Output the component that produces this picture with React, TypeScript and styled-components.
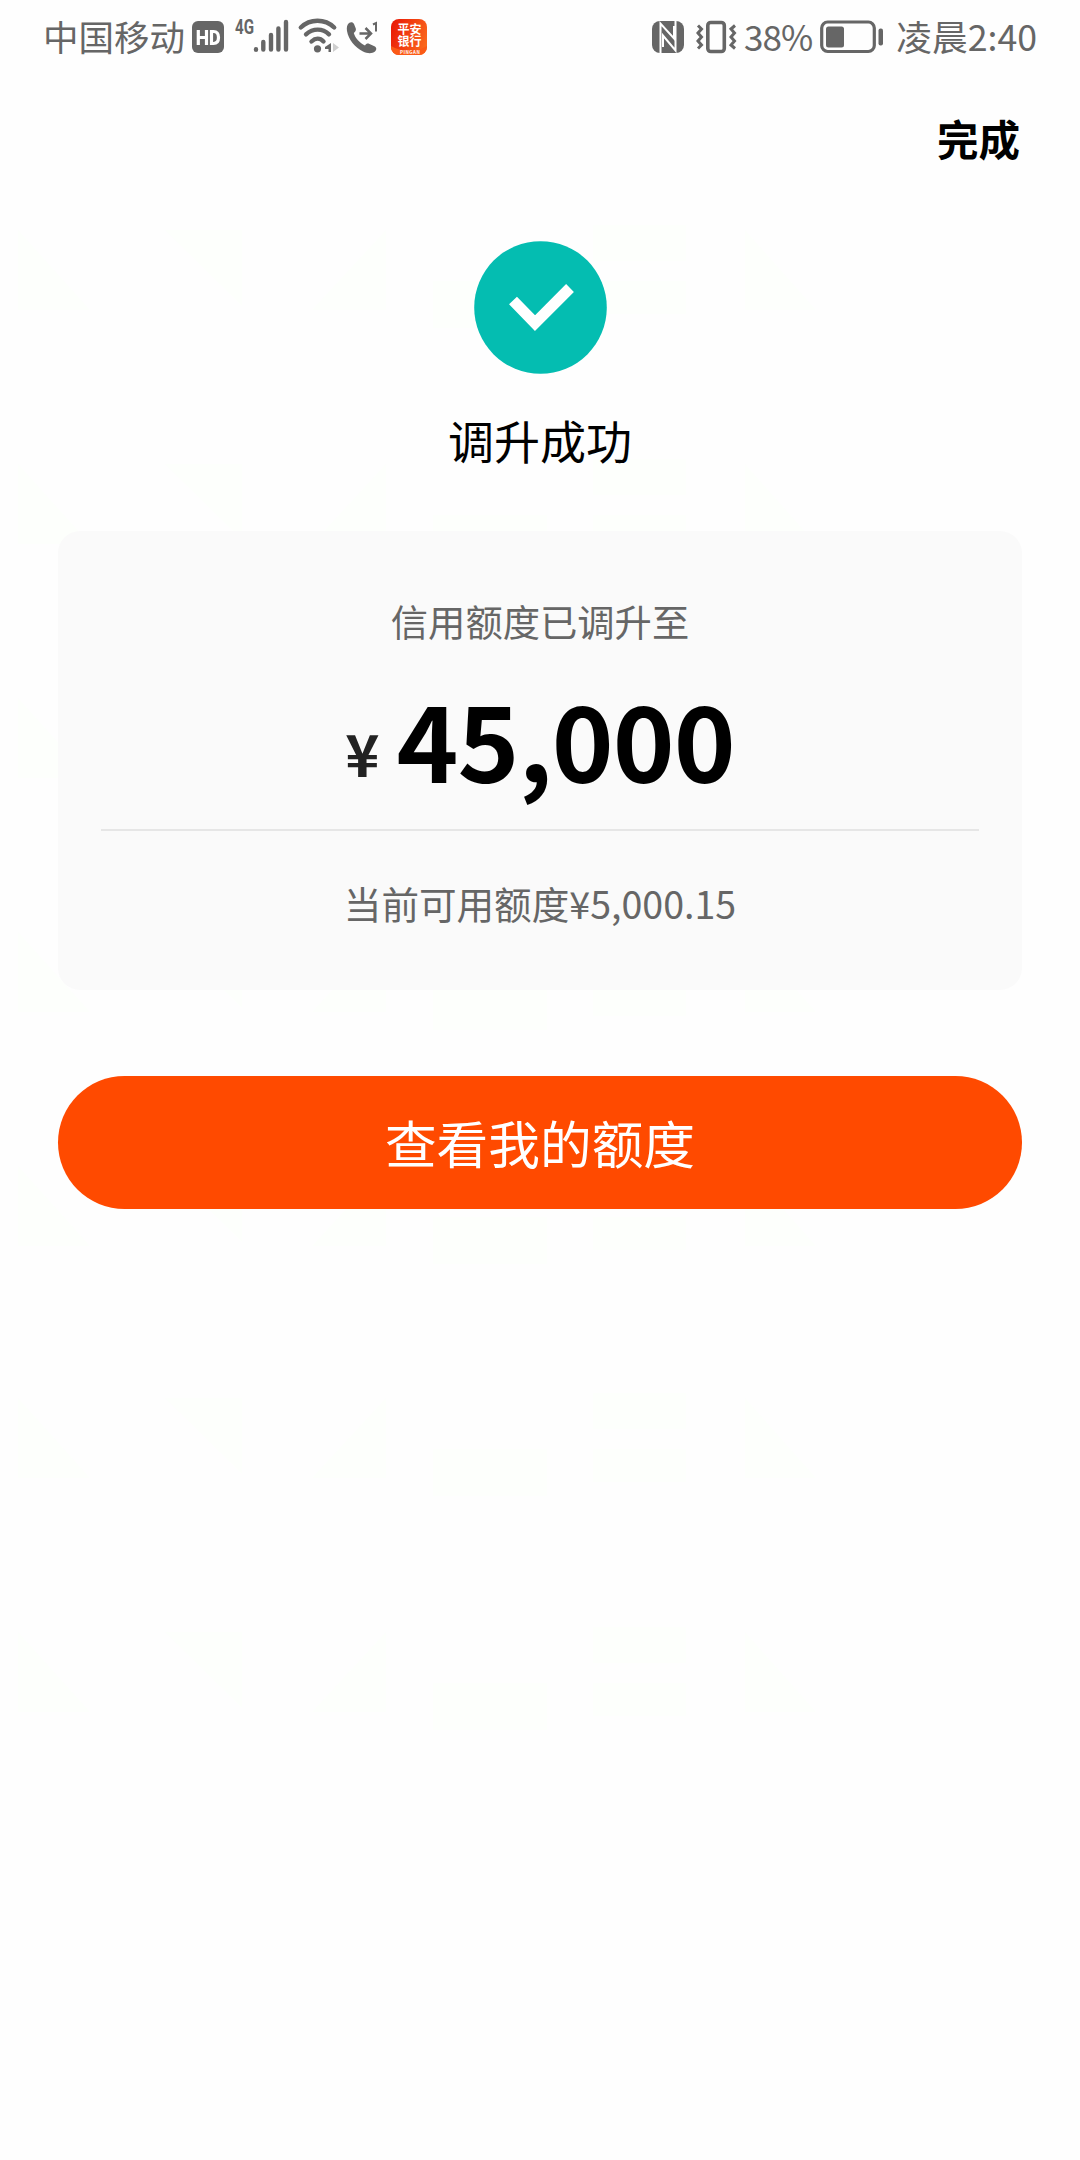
import React from "react";
import styled, { createGlobalStyle } from "styled-components";

const GREY = "#666666";

const Global = createGlobalStyle`
  * { box-sizing: border-box; }
  html, body { margin: 0; padding: 0; background: #fefefe; }
  body { font-family: "Noto Sans CJK SC", "Noto Sans", sans-serif; }
`;

const Screen = styled.main`
  position: relative;
  isolation: isolate;
  display: flex;
  flex-direction: column;
  width: 1080px;
  height: 2160px;
  overflow: hidden;
  background: #fefefe;
`;

const Watermark = styled.svg`
  position: absolute;
  inset: 0;
  z-index: -1;
  pointer-events: none;
`;

const StatusBar = styled.header`
  display: flex;
  justify-content: space-between;
  align-items: center;
  height: 74px;
  padding: 0 43px 0 43px;
  color: ${GREY};
`;

const StatusGroup = styled.div`
  display: flex;
  align-items: center;
`;

const StatusText = styled.span<{ $size?: number; $spacing?: number; $gap?: number }>`
  font-size: ${(p) => p.$size ?? 35.5}px;
  line-height: 50px;
  padding-bottom: 3px;
  font-weight: 400;
  letter-spacing: ${(p) => p.$spacing ?? 0}px;
  margin-left: ${(p) => p.$gap ?? 0}px;
  white-space: nowrap;
`;

const Icon = styled.svg<{ $gap?: number }>`
  display: block;
  flex: none;
  overflow: visible;
  margin-left: ${(p) => p.$gap ?? 0}px;
`;

const NavBar = styled.nav`
  display: flex;
  justify-content: flex-end;
  align-items: center;
  height: 132px;
  padding: 0 60px 5px 0;
`;

const DoneButton = styled.button`
  border: 0;
  padding: 0;
  background: none;
  font: inherit;
  font-size: 41.5px;
  line-height: 60px;
  font-weight: 700;
  color: #000;
`;

const Result = styled.section`
  display: flex;
  flex-direction: column;
  align-items: center;
  padding-top: 35px;
`;

const ResultTitle = styled.h1`
  margin: 31px 0 3px;
  font-size: 46px;
  line-height: 68px;
  font-weight: 400;
  color: #000;
`;

const Card = styled.section`
  display: flex;
  flex-direction: column;
  align-items: center;
  height: 459px;
  margin: 55px 58px 0;
  padding: 63px 43px 0;
  border-radius: 22px;
  background: #fafafa;
`;

const Caption = styled.p<{ $top?: number; $size?: number }>`
  margin: ${(p) => p.$top ?? 0}px 0 0;
  font-size: ${(p) => p.$size ?? 37.3}px;
  line-height: 54px;
  font-weight: 400;
  color: ${GREY};
  white-space: nowrap;
`;

const Amount = styled.div`
  display: flex;
  align-items: baseline;
  height: 181px;
  line-height: 179px;
  font-weight: 700;
  color: #000;
`;

const Currency = styled.span`
  position: relative;
  top: -6px;
  margin-right: 17px;
  font-size: 58px;
  color: #222;
`;

const Figure = styled.span`
  font-size: 105px;
  letter-spacing: -0.9px;
`;

const Divider = styled.hr`
  width: 878px;
  height: 2px;
  margin: 0;
  border: 0;
  background: #e6e6e6;
`;

const PrimaryButton = styled.button`
  height: 133px;
  margin: 86px 58px 0;
  padding: 0 0 1px;
  border: 0;
  border-radius: 67px;
  background: #ff4a00;
  font: inherit;
  font-size: 51.7px;
  line-height: 76px;
  color: #fff;
`;

const WATERMARK_ROWS = [0, 1, 2, 3, 4, 5, 6];

function BackgroundPattern() {
  return (
    <Watermark width="1080" height="2160" fill="#fdfffc">
      {WATERMARK_ROWS.map((row) => (
        <g key={row} transform={`translate(0 ${row < 5 ? 228 + row * 234 : 226 + row * 234})`}>
          <path d="M18 2L90 82H18zM165 2H242V78zM386 2V82H312zM745 2L816 82H745z" />
          <path d="M593 -3H686V33H593zM593 53H686V86H593zM433 53H547V100H433z" />
        </g>
      ))}
    </Watermark>
  );
}

const HdIcon = () => (
  <Icon $gap={7} width="32" height="32" viewBox="0 0 32 32">
    <rect x="0" y="0" width="32" height="32" rx="6" fill={GREY} />
    <path
      d="M6.300 9V24M14.500 9V24M6 16.500H14.500M19.500 10.500V22.500H21.500C25 22.500 26.500 20.500 26.500 16.500S25 10.500 21.500 10.500z"
      fill="none"
      stroke="#fff"
      strokeWidth="3.200"
    />
  </Icon>
);

const SignalText = styled.text`
  font-family: Roboto, sans-serif;
  font-weight: 700;
`;

const SignalIcon = () => (
  <Icon $gap={11} width="56" height="40" viewBox="0 0 56 40">
    <SignalText x="0" y="17" fontSize="20" textLength="19" lengthAdjust="spacingAndGlyphs" fill={GREY}>
      4G
    </SignalText>
    <g stroke={GREY} strokeWidth="4.400" strokeLinecap="round">
      <path d="M21 32.300V32.700M28.300 25V32.500M36 18V32.500M43.400 11.500V32.500M51 5V32.500" />
    </g>
  </Icon>
);

const WifiIcon = () => (
  <Icon $gap={7} width="42" height="40" viewBox="0 0 42 40">
    <g fill="none" stroke={GREY} strokeWidth="4.400" strokeLinecap="round">
      <path d="M2.800 10.500C12 1.500 27 1.500 36.200 10.500" />
      <path d="M8 17.300C15 11 24.500 11 31 17.300" />
      <path d="M13.500 24.500C17.500 20.800 22 20.800 25.500 24.500" />
    </g>
    <circle cx="19.500" cy="31.800" r="3.600" fill={GREY} />
    <path d="M33 26V35H30.500V32H27V30z" fill={GREY} />
    <path d="M35 26L41 30.500L35 35z" fill="#cfcfcf" />
  </Icon>
);

const CallIcon = () => (
  <Icon $gap={6} width="34" height="40" viewBox="0 0 34 40">
    <path
      d="M3 6C5 4.500 7 5 8 7L9.800 11.500C10.300 13.500 9.300 14.500 7.800 16C9 21 14 26 19 28.500C20.500 26.500 21.500 26 23.500 27L29 29.500C31 31 30.500 33 29 34.500C26 37 21 36.500 17 34.500C9 30.500 2.500 22.500 1 14C.5 10.500 1 7.500 3 6z"
      fill={GREY}
    />
    <path d="M13.500 16.500H24.500M19.500 11L25 16.500L19.500 22" fill="none" stroke={GREY} strokeWidth="2.500" />
    <path d="M27 7.500L30 6V14.500" fill="none" stroke={GREY} strokeWidth="2" />
  </Icon>
);

const BankText = styled.text`
  font-family: "Noto Sans CJK SC", sans-serif;
  font-weight: 700;
`;

const BankIcon = () => (
  <Icon $gap={11} width="36" height="36" viewBox="0 0 36 36">
    <defs>
      <linearGradient id="bank" x1="0" y1="0.300" x2="1" y2="0.700">
        <stop offset="0" stopColor="#ea1c08" />
        <stop offset="1" stopColor="#fb6a1c" />
      </linearGradient>
      <clipPath id="bankClip">
        <rect width="36" height="36" rx="8" />
      </clipPath>
    </defs>
    <g clipPath="url(#bankClip)">
      <rect width="36" height="36" fill="url(#bank)" />
      <path d="M0 27C10 33 26 33 36 27V36H0z" fill="#fb5a16" />
    </g>
    <BankText fill="#fff" fontSize="12">
      <tspan x="6.500" y="15">平安</tspan>
      <tspan x="6.500" y="26.500">银行</tspan>
      <tspan x="9" y="35" fontSize="4.500" letterSpacing="0.500">PINGAN</tspan>
    </BankText>
  </Icon>
);

const NfcIcon = () => (
  <Icon width="33" height="32" viewBox="0 0 33 32">
    <rect x="0" y="0" width="32" height="32" rx="8" fill={GREY} />
    <path d="M11 3L22.500 17.500V24L11 10z" fill={GREY} />
    <path d="M8.500 32V2.500L22 17.500V5" fill="none" stroke="#fff" strokeWidth="2" />
    <path d="M23.500 0V29.500L11 14.500V26" fill="none" stroke="#fff" strokeWidth="2" />
  </Icon>
);

const VibrateIcon = () => (
  <Icon $gap={10} width="42" height="34" viewBox="0 0 42 34">
    <rect x="12.800" y="2.500" width="16.500" height="29" rx="3" fill="none" stroke={GREY} strokeWidth="3.600" />
    <path
      d="M3 5.500L6.500 9L3 13L6.500 17L3 21L6.500 25L3 28.500M40 5.500L36 9L39.500 13L36 17L39.500 21L36 25L40 28.500"
      fill="none"
      stroke={GREY}
      strokeWidth="3"
    />
  </Icon>
);

const BatteryIcon = () => (
  <Icon $gap={8} width="64" height="34" viewBox="0 0 64 34">
    <rect x="1.700" y="2" width="52.600" height="29.500" rx="6" fill="none" stroke={GREY} strokeWidth="3.200" />
    <rect x="6" y="6.500" width="18" height="21" rx="2.500" fill={GREY} />
    <rect x="58.500" y="8.500" width="4.500" height="17" rx="2" fill={GREY} />
  </Icon>
);

const SuccessIcon = () => (
  <Icon width="133" height="133" viewBox="0 0 133 133">
    <circle cx="66.500" cy="66.500" r="66.300" fill="#04bdb1" />
    <path d="M39 59.500L61 82.200L96 47" fill="none" stroke="#fff" strokeWidth="11" />
  </Icon>
);

export default function App() {
  return (
    <>
      <Global />
      <Screen>
        <BackgroundPattern />
        <StatusBar>
          <StatusGroup>
            <StatusText>中国移动</StatusText>
            <HdIcon />
            <SignalIcon />
            <WifiIcon />
            <CallIcon />
            <BankIcon />
          </StatusGroup>
          <StatusGroup>
            <NfcIcon />
            <VibrateIcon />
            <StatusText $gap={7} $size={35} $spacing={-0.9}>38%</StatusText>
            <BatteryIcon />
            <StatusText $gap={12} $size={35.7}>凌晨2:40</StatusText>
          </StatusGroup>
        </StatusBar>
        <NavBar>
          <DoneButton>完成</DoneButton>
        </NavBar>
        <Result>
          <SuccessIcon />
          <ResultTitle>调升成功</ResultTitle>
        </Result>
        <Card>
          <Caption>信用额度已调升至</Caption>
          <Amount>
            <Currency>¥</Currency>
            <Figure>45,000</Figure>
          </Amount>
          <Divider />
          <Caption $top={45} $size={37.6}>当前可用额度¥5,000.15</Caption>
        </Card>
        <PrimaryButton>查看我的额度</PrimaryButton>
      </Screen>
    </>
  );
}
